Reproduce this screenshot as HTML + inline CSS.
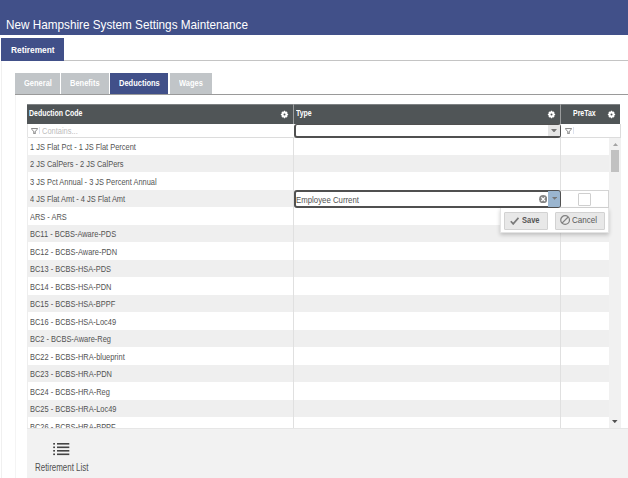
<!DOCTYPE html>
<html><head><meta charset="utf-8">
<style>
*{box-sizing:border-box;margin:0;padding:0}
html,body{width:628px;height:478px;overflow:hidden;background:#fff;font-family:"Liberation Sans",sans-serif;position:relative}
.abs{position:absolute}
.sx{display:inline-block;transform-origin:0 0;white-space:nowrap}
#hdr{left:0;top:0;width:628px;height:35px;background:#415089}
#title{left:5.7px;top:18px;color:#fff;font-size:12.8px;line-height:13px}
#title .sx{transform:scaleX(0.917)}
#rtab{left:1.3px;top:38px;width:62.6px;height:22.5px;background:#415089}
#rtabt{left:10.8px;top:46px;color:#fff;font-weight:bold;font-size:8.8px;line-height:9px}
#rtabt .sx{transform:scaleX(0.95)}
#line1{left:63.9px;top:60.2px;width:570px;height:1px;background:#c4c4c4}
#vl1{left:1px;top:61px;width:1px;height:420px;background:#f0f0f0}
#vl2{left:15px;top:95px;width:1px;height:390px;background:#f4f4f4}
.st{top:73px;height:21px;background:#c1c5c8}
.stt{top:78.8px;color:#fff;font-weight:bold;font-size:8.2px;line-height:9px}
.stt .sx{transform:scaleX(0.915)}
#line2{left:15px;top:93.8px;width:620px;height:1.2px;background:#9a9a9a}
#gh{left:26.8px;top:104px;width:593.7px;height:19.6px;background:#505557}
.ght{top:109.3px;color:#fff;font-weight:bold;font-size:8.3px;line-height:8px}
.ght .sx{transform:scaleX(0.84)}
.gear{position:absolute;width:9px;height:9px}
.csep{position:absolute;width:1px;background:#e0e0e0}
#filt{left:26.8px;top:123.6px;width:593.7px;height:14.4px;background:#fff;border-bottom:1px solid #dcdcdc;border-left:1px solid #e4e4e4}
.fph{color:#bdbdbd;font-size:8.6px;line-height:9px}
#gb{left:26.8px;top:137.4px;width:582.2px;height:290.6px;overflow:hidden;border-left:1px solid #eeeeee}
.row{position:absolute;left:0;width:582.7px;height:17.5px}
.row.alt{background:#efefef}
.rt{position:absolute;left:2px;top:5.3px;color:#525252;font-size:9.2px;line-height:9px}
.rt .sx{transform:scaleX(0.81)}
#sb{left:609px;top:137.4px;width:11.6px;height:290.6px;background:#f1f1f1}
#thumb{left:611px;top:150px;width:8.2px;height:21.7px;background:#c1c1c1}
#panel{left:26.9px;top:428px;width:602px;height:50px;background:#f2f2f2;border-top:1px solid #e6e6e6}
#plt{left:34.6px;top:463.3px;color:#505050;font-size:10px;line-height:10px}
#plt .sx{transform:scaleX(0.795)}
</style></head><body>
<div class="abs" id="hdr"></div>
<div class="abs" id="title"><span class="sx">New Hampshire System Settings Maintenance</span></div>
<div class="abs" id="rtab"></div>
<div class="abs" id="rtabt"><span class="sx">Retirement</span></div>
<div class="abs" id="line1"></div>
<div class="abs" id="vl1"></div>
<div class="abs" id="vl2"></div>

<div class="abs st" style="left:14.8px;width:45px"></div>
<div class="abs st" style="left:61px;width:47.8px"></div>
<div class="abs st" style="left:110.2px;width:57.9px;background:#415089"></div>
<div class="abs st" style="left:170px;width:41.8px"></div>
<div class="abs stt" style="left:23.5px"><span class="sx">General</span></div>
<div class="abs stt" style="left:70.2px"><span class="sx">Benefits</span></div>
<div class="abs stt" style="left:119.3px"><span class="sx">Deductions</span></div>
<div class="abs stt" style="left:179px"><span class="sx">Wages</span></div>
<div class="abs" id="line2"></div>

<div class="abs" id="gh"></div>
<div class="abs" style="left:26.8px;top:104px;width:593.7px;height:1px;background:#7e8284"></div>
<div class="abs" style="left:26.8px;top:124px;width:593.7px;height:1px;background:#a6a9aa"></div>
<div class="abs ght" style="left:29.2px"><span class="sx">Deduction Code</span></div>
<div class="abs ght" style="left:295.9px"><span class="sx">Type</span></div>
<div class="abs ght" style="left:573.4px"><span class="sx">PreTax</span></div>
<svg class="gear" style="left:279.8px;top:110.2px" viewBox="0 0 9 9"><path d="M7.32 5.67 L7.16 5.99 L7.49 6.67 L6.67 7.49 L5.99 7.16 L5.67 7.32 L5.33 7.44 L5.08 8.15 L3.92 8.15 L3.67 7.44 L3.33 7.32 L3.01 7.16 L2.33 7.49 L1.51 6.67 L1.84 5.99 L1.68 5.67 L1.56 5.33 L0.85 5.08 L0.85 3.92 L1.56 3.67 L1.68 3.33 L1.84 3.01 L1.51 2.33 L2.33 1.51 L3.01 1.84 L3.33 1.68 L3.67 1.56 L3.92 0.85 L5.08 0.85 L5.33 1.56 L5.67 1.68 L5.99 1.84 L6.67 1.51 L7.49 2.33 L7.16 3.01 L7.32 3.33 L7.44 3.67 L8.15 3.92 L8.15 5.08 L7.44 5.33Z" fill="#fff"/><circle cx="4.5" cy="4.5" r="1" fill="#505557"/></svg>
<svg class="gear" style="left:547px;top:110.2px" viewBox="0 0 9 9"><path d="M7.32 5.67 L7.16 5.99 L7.49 6.67 L6.67 7.49 L5.99 7.16 L5.67 7.32 L5.33 7.44 L5.08 8.15 L3.92 8.15 L3.67 7.44 L3.33 7.32 L3.01 7.16 L2.33 7.49 L1.51 6.67 L1.84 5.99 L1.68 5.67 L1.56 5.33 L0.85 5.08 L0.85 3.92 L1.56 3.67 L1.68 3.33 L1.84 3.01 L1.51 2.33 L2.33 1.51 L3.01 1.84 L3.33 1.68 L3.67 1.56 L3.92 0.85 L5.08 0.85 L5.33 1.56 L5.67 1.68 L5.99 1.84 L6.67 1.51 L7.49 2.33 L7.16 3.01 L7.32 3.33 L7.44 3.67 L8.15 3.92 L8.15 5.08 L7.44 5.33Z" fill="#fff"/><circle cx="4.5" cy="4.5" r="1" fill="#505557"/></svg>
<svg class="gear" style="left:607px;top:110.2px" viewBox="0 0 9 9"><path d="M7.32 5.67 L7.16 5.99 L7.49 6.67 L6.67 7.49 L5.99 7.16 L5.67 7.32 L5.33 7.44 L5.08 8.15 L3.92 8.15 L3.67 7.44 L3.33 7.32 L3.01 7.16 L2.33 7.49 L1.51 6.67 L1.84 5.99 L1.68 5.67 L1.56 5.33 L0.85 5.08 L0.85 3.92 L1.56 3.67 L1.68 3.33 L1.84 3.01 L1.51 2.33 L2.33 1.51 L3.01 1.84 L3.33 1.68 L3.67 1.56 L3.92 0.85 L5.08 0.85 L5.33 1.56 L5.67 1.68 L5.99 1.84 L6.67 1.51 L7.49 2.33 L7.16 3.01 L7.32 3.33 L7.44 3.67 L8.15 3.92 L8.15 5.08 L7.44 5.33Z" fill="#fff"/><circle cx="4.5" cy="4.5" r="1" fill="#505557"/></svg>
<div class="abs" style="left:293px;top:104px;width:1px;height:19.6px;background:#9a9c9d"></div>
<div class="abs" style="left:560px;top:104px;width:1px;height:19.6px;background:#9a9c9d"></div>

<div class="abs" id="filt"></div>

<div class="abs" id="gb">
<div class="row" style="top:0.0px"><span class="rt"><span class="sx">1 JS Flat Pct - 1 JS Flat Percent</span></span></div>
<div class="row alt" style="top:17.5px"><span class="rt"><span class="sx">2 JS CalPers - 2 JS CalPers</span></span></div>
<div class="row" style="top:35.0px"><span class="rt"><span class="sx">3 JS Pct Annual - 3 JS Percent Annual</span></span></div>
<div class="row alt" style="top:52.5px"><span class="rt"><span class="sx">4 JS Flat Amt - 4 JS Flat Amt</span></span></div>
<div class="row" style="top:70.0px"><span class="rt"><span class="sx">ARS - ARS</span></span></div>
<div class="row alt" style="top:87.5px"><span class="rt"><span class="sx">BC11 - BCBS-Aware-PDS</span></span></div>
<div class="row" style="top:105.0px"><span class="rt"><span class="sx">BC12 - BCBS-Aware-PDN</span></span></div>
<div class="row alt" style="top:122.5px"><span class="rt"><span class="sx">BC13 - BCBS-HSA-PDS</span></span></div>
<div class="row" style="top:140.0px"><span class="rt"><span class="sx">BC14 - BCBS-HSA-PDN</span></span></div>
<div class="row alt" style="top:157.5px"><span class="rt"><span class="sx">BC15 - BCBS-HSA-BPPF</span></span></div>
<div class="row" style="top:175.0px"><span class="rt"><span class="sx">BC16 - BCBS-HSA-Loc49</span></span></div>
<div class="row alt" style="top:192.5px"><span class="rt"><span class="sx">BC2 - BCBS-Aware-Reg</span></span></div>
<div class="row" style="top:210.0px"><span class="rt"><span class="sx">BC22 - BCBS-HRA-blueprint</span></span></div>
<div class="row alt" style="top:227.5px"><span class="rt"><span class="sx">BC23 - BCBS-HRA-PDN</span></span></div>
<div class="row" style="top:245.0px"><span class="rt"><span class="sx">BC24 - BCBS-HRA-Reg</span></span></div>
<div class="row alt" style="top:262.5px"><span class="rt"><span class="sx">BC25 - BCBS-HRA-Loc49</span></span></div>
<div class="row" style="top:280.0px"><span class="rt"><span class="sx">BC26 - BCBS-HRA-BPPF</span></span></div>
</div>
<div class="csep" style="left:293px;top:137.4px;height:291px"></div>
<div class="csep" style="left:560px;top:123.6px;height:305px"></div>

<div class="abs" id="sb"></div>
<div class="abs" id="thumb"></div>
<div class="abs" id="panel"></div>

<!-- filter row -->
<svg class="abs" style="left:31px;top:127.8px;width:7px;height:6.5px" viewBox="0 0 7 6.5"><path d="M0.55 0.55 H6.45 V1.2 L4.2 3.4 V5.9 H2.8 V3.4 L0.55 1.2 Z" fill="none" stroke="#666" stroke-width="0.8" stroke-linejoin="round"/></svg>
<div class="abs" style="left:39px;top:126.6px;width:0.8px;height:7.8px;background:#dde2ee"></div>
<div class="abs fph" style="left:41.8px;top:127px"><span class="sx" style="transform:scaleX(0.87)">Contains...</span></div>
<div class="abs" style="left:293.5px;top:124.2px;width:267px;height:13.5px;border:2px solid #505050;border-top-width:1px;border-radius:3px;background:#fff"></div>
<div class="abs" style="left:548.4px;top:125px;width:11.2px;height:11px;background:#e6e6e6"></div>
<svg class="abs" style="left:551px;top:128.9px;width:6px;height:3.5px" viewBox="0 0 6 3.5"><path d="M0 0H6L3 3.5Z" fill="#777"/></svg>
<svg class="abs" style="left:564.8px;top:127.8px;width:7px;height:6.5px" viewBox="0 0 7 6.5"><path d="M0.55 0.55 H6.45 V1.2 L4.2 3.4 V5.9 H2.8 V3.4 L0.55 1.2 Z" fill="none" stroke="#666" stroke-width="0.8" stroke-linejoin="round"/></svg>
<div class="abs" style="left:573px;top:126.6px;width:0.8px;height:7.8px;background:#dde2ee"></div>
<div class="abs" style="left:560.5px;top:123.8px;width:60px;height:13.8px;border:1px solid #dcdcdc;border-top:none;border-left:none"></div>

<!-- edit row -->
<div class="abs" style="left:293.8px;top:190px;width:267px;height:17.6px;border:2px solid #505050;border-radius:3px;background:#fff"></div>
<div class="abs rt" style="left:295.8px;top:195.9px"><span class="sx" style="transform:scaleX(0.85)">Employee Current</span></div>
<svg class="abs" style="left:538.7px;top:194.6px;width:8.4px;height:8.4px" viewBox="0 0 8.4 8.4"><circle cx="4.2" cy="4.2" r="4.1" fill="#858585"/><path d="M2.4 2.4L6 6M6 2.4L2.4 6" stroke="#fff" stroke-width="1.3"/></svg>
<div class="abs" style="left:548.3px;top:191px;width:11.7px;height:15.6px;background:#9ab5cf;border-radius:0 1.5px 1.5px 0"></div>
<svg class="abs" style="left:551.7px;top:196.8px;width:5.2px;height:2.8px" viewBox="0 0 5.2 2.8"><path d="M0 0H5.2L2.6 2.8Z" fill="#777"/></svg>
<div class="abs" style="left:560.5px;top:190.2px;width:48.6px;height:17.6px;background:#fff;border-top:1px solid #d4d4d4;border-bottom:1px solid #d4d4d4;border-right:1px solid #d4d4d4"></div>
<div class="abs" style="left:578.3px;top:193.3px;width:12.5px;height:12.5px;background:#fff;border:1px solid #cfcfcf;border-radius:1px"></div>

<!-- popup -->
<div class="abs" style="left:499.8px;top:207.6px;width:109.7px;height:25.6px;background:#fff;border:1px solid #e4e4e4;border-top:none;box-shadow:0 2px 4px rgba(0,0,0,0.2)"></div>
<div class="abs" style="left:504.1px;top:212.1px;width:43.9px;height:17.5px;background:#e8e8e8;border:1px solid #d2d2d2;border-radius:1px"></div>
<svg class="abs" style="left:510px;top:216.6px;width:9.2px;height:8px" viewBox="0 0 9.2 8"><path d="M0.8 4.2L3.2 6.9L8.5 0.8" fill="none" stroke="#7a7a7a" stroke-width="1.7"/></svg>
<div class="abs" style="left:522px;top:215.2px;color:#555;font-weight:bold;font-size:9.5px;line-height:10px"><span class="sx" style="transform:scaleX(0.79)">Save</span></div>
<div class="abs" style="left:554.7px;top:212.1px;width:50.2px;height:17.5px;background:#e8e8e8;border:1px solid #d2d2d2;border-radius:1px"></div>
<svg class="abs" style="left:559.8px;top:215.4px;width:10.2px;height:10.2px" viewBox="0 0 10 10"><circle cx="5" cy="5" r="4.3" fill="none" stroke="#808080" stroke-width="1.2"/><path d="M2 8L8 2" stroke="#808080" stroke-width="1.2"/></svg>
<div class="abs" style="left:572px;top:215.3px;color:#5a5a5a;font-size:9.6px;line-height:10px"><span class="sx" style="transform:scaleX(0.84)">Cancel</span></div>

<!-- scroll arrows -->
<svg class="abs" style="left:612.5px;top:143px;width:5px;height:3px" viewBox="0 0 5 3"><path d="M0 3H5L2.5 0Z" fill="#a3a3a3"/></svg>
<svg class="abs" style="left:612.2px;top:419.8px;width:5.6px;height:3.2px" viewBox="0 0 5.6 3.2"><path d="M0 0H5.6L2.8 3.2Z" fill="#505050"/></svg>

<!-- list icon -->
<svg class="abs" style="left:52.9px;top:442.6px;width:17px;height:13.5px" viewBox="0 0 17 13.5"><g fill="#444"><rect x="0.2" y="0" width="1.8" height="1.6"/><rect x="4" y="0" width="12.3" height="1.6"/><rect x="0.2" y="3.5" width="1.8" height="1.6"/><rect x="4" y="3.5" width="12.3" height="1.6"/><rect x="0.2" y="7" width="1.8" height="1.6"/><rect x="4" y="7" width="12.3" height="1.6"/><rect x="0.2" y="10.5" width="1.8" height="1.6"/><rect x="4" y="10.5" width="12.3" height="1.6"/></g></svg>
<div class="abs" id="plt"><span class="sx">Retirement List</span></div>
</body></html>
